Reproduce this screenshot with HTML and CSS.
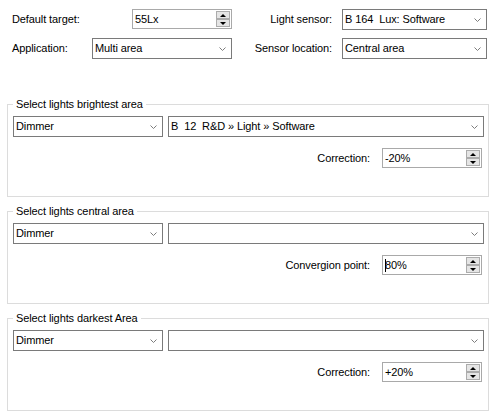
FILE: index.html
```html
<!DOCTYPE html>
<html>
<head>
<meta charset="utf-8">
<link rel="stylesheet" href="styles.css">
</head>
<body>
<div class="form">
  <div class="top">
    <div class="lbl">Default target:</div>
    <div class="spin spin-top"><span class="val">55Lx</span><span class="btns"><span class="btn"><i class="up"></i></span><span class="btn"><i class="dn"></i></span></span></div>
    <div class="lbl right">Light sensor:</div>
    <div class="combo"><span class="val">B 164  Lux: Software</span><svg class="chev" width="7" height="4" viewBox="0 0 7 4"><polyline points="0.5,0.5 3.5,3.5 6.5,0.5" fill="none" stroke="#7d7d7d" stroke-width="1"/></svg></div>

    <div class="lbl">Application:</div>
    <div class="combo"><span class="val">Multi area</span><svg class="chev" width="7" height="4" viewBox="0 0 7 4"><polyline points="0.5,0.5 3.5,3.5 6.5,0.5" fill="none" stroke="#7d7d7d" stroke-width="1"/></svg></div>
    <div class="lbl right">Sensor location:</div>
    <div class="combo"><span class="val">Central area</span><svg class="chev" width="7" height="4" viewBox="0 0 7 4"><polyline points="0.5,0.5 3.5,3.5 6.5,0.5" fill="none" stroke="#7d7d7d" stroke-width="1"/></svg></div>
  </div>

  <fieldset class="group first">
    <legend>Select lights brightest area</legend>
    <div class="row">
      <div class="combo dim"><span class="val">Dimmer</span><svg class="chev" width="7" height="4" viewBox="0 0 7 4"><polyline points="0.5,0.5 3.5,3.5 6.5,0.5" fill="none" stroke="#7d7d7d" stroke-width="1"/></svg></div>
      <div class="combo wide"><span class="val">B  12  R&amp;D » Light » Software</span><svg class="chev" width="7" height="4" viewBox="0 0 7 4"><polyline points="0.5,0.5 3.5,3.5 6.5,0.5" fill="none" stroke="#7d7d7d" stroke-width="1"/></svg></div>
    </div>
    <div class="row2">
      <div class="lbl">Correction:</div>
      <div class="spin"><span class="val">-20%</span><span class="btns"><span class="btn"><i class="up"></i></span><span class="btn"><i class="dn"></i></span></span></div>
    </div>
  </fieldset>

  <fieldset class="group">
    <legend>Select lights central area</legend>
    <div class="row">
      <div class="combo dim"><span class="val">Dimmer</span><svg class="chev" width="7" height="4" viewBox="0 0 7 4"><polyline points="0.5,0.5 3.5,3.5 6.5,0.5" fill="none" stroke="#7d7d7d" stroke-width="1"/></svg></div>
      <div class="combo wide"><span class="val"></span><svg class="chev" width="7" height="4" viewBox="0 0 7 4"><polyline points="0.5,0.5 3.5,3.5 6.5,0.5" fill="none" stroke="#7d7d7d" stroke-width="1"/></svg></div>
    </div>
    <div class="row2">
      <div class="lbl">Convergion point:</div>
      <div class="spin"><span class="val"><span class="caret"></span>80%</span><span class="btns"><span class="btn"><i class="up"></i></span><span class="btn"><i class="dn"></i></span></span></div>
    </div>
  </fieldset>

  <fieldset class="group">
    <legend>Select lights darkest Area</legend>
    <div class="row">
      <div class="combo dim"><span class="val">Dimmer</span><svg class="chev" width="7" height="4" viewBox="0 0 7 4"><polyline points="0.5,0.5 3.5,3.5 6.5,0.5" fill="none" stroke="#7d7d7d" stroke-width="1"/></svg></div>
      <div class="combo wide"><span class="val"></span><svg class="chev" width="7" height="4" viewBox="0 0 7 4"><polyline points="0.5,0.5 3.5,3.5 6.5,0.5" fill="none" stroke="#7d7d7d" stroke-width="1"/></svg></div>
    </div>
    <div class="row2">
      <div class="lbl">Correction:</div>
      <div class="spin"><span class="val">+20%</span><span class="btns"><span class="btn"><i class="up"></i></span><span class="btn"><i class="dn"></i></span></span></div>
    </div>
  </fieldset>
</div>
</body>
</html>
```

FILE: styles.css
```css
html, body {
  margin: 0;
  padding: 0;
  background: #ffffff;
}
body {
  font-family: "Liberation Sans", Arial, sans-serif;
  font-size: 11px;
  letter-spacing: -0.1px;
  color: #000000;
  width: 492px;
  height: 417px;
  overflow: hidden;
}
.form {
  display: flex;
  flex-direction: column;
}
.top {
  display: grid;
  grid-template-columns: 80px 140px 110px 145px;
  grid-auto-rows: 21px;
  row-gap: 8px;
  padding: 9px 0 0 12px;
  align-items: center;
}
.lbl {
  white-space: nowrap;
  line-height: 13px;
}
.lbl.right {
  text-align: right;
  padding-right: 10px;
}
.combo {
  box-sizing: border-box;
  height: 21px;
  border: 1px solid #7a7a7a;
  background: #ffffff;
  display: flex;
  align-items: center;
  padding: 0 5px 0 2px;
}
.combo .val {
  flex: 1;
  white-space: pre;
  overflow: hidden;
  line-height: 13px;
}
.chev {
  display: block;
  flex: none;
}
.spin {
  box-sizing: border-box;
  width: 100px;
  height: 20px;
  border: 1px solid #a9a9a9;
  background: #ffffff;
  display: flex;
  align-items: stretch;
}
.spin-top {
  justify-self: end;
  align-self: start;
}
.spin .val {
  flex: 1;
  padding-left: 2px;
  line-height: 16px;
  white-space: pre;
  display: flex;
  align-items: center;
}
.caret {
  display: inline-block;
  width: 1px;
  height: 13px;
  background: #000000;
  margin-right: -1px;
}
.btns {
  width: 14px;
  display: flex;
  flex-direction: column;
  padding: 1px 1px 1px 0;
}
.btn {
  flex: 1;
  box-sizing: border-box;
  border: 1px solid #acacac;
  background: #e5e5e5;
  display: flex;
  align-items: center;
  justify-content: center;
}
.up {
  width: 0;
  height: 0;
  border-left: 3px solid transparent;
  border-right: 3px solid transparent;
  border-bottom: 3px solid #000000;
}
.dn {
  width: 0;
  height: 0;
  border-left: 3px solid transparent;
  border-right: 3px solid transparent;
  border-top: 3px solid #000000;
}
.group {
  margin: 8px 3px 0 7px;
  padding: 5px 4px 28px 5px;
  border: 1px solid #dcdcdc;
  min-width: 0;
}
.group.first {
  margin-top: 39px;
}
.group legend {
  padding: 0 3px;
  line-height: 13px;
  height: 13px;
  margin-left: 0;
}
.row {
  display: flex;
  gap: 5px;
}
.combo.dim {
  width: 150px;
  flex: none;
}
.combo.wide {
  flex: 1;
}
.row2 {
  display: flex;
  justify-content: flex-end;
  align-items: center;
  gap: 12px;
  margin-top: 11px;
  padding-right: 2px;
}
```
